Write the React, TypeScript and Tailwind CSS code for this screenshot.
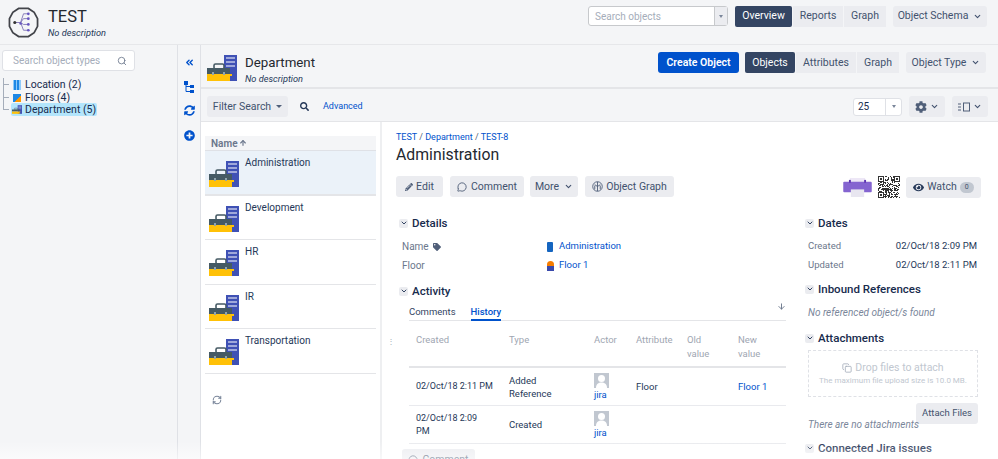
import React from "react";
import { ArrowDown, ArrowUp, ChevronDown, ChevronsLeft, Copy, MessageCircle, RefreshCw, Search } from "lucide-react";
import { FaCog, FaEye, FaPencilAlt, FaPlusCircle, FaSearch, FaSyncAlt, FaTag } from "react-icons/fa";

const Caret = () => <span className="ml-[5px] inline-block h-0 w-0 border-x-[3px] border-t-[3px] border-x-transparent border-t-[#505f79]" />;

const Btn = ({ children, className = "" }: { children: React.ReactNode; className?: string }) => (
  <div className={`flex h-[21px] items-center justify-center rounded-[3px] bg-[#ebecf0] text-[10.5px] text-[#42526e] ${className}`}>{children}</div>
);

const Seg = ({ items, active }: { items: { label: string; w: string }[]; active: string }) => (
  <div className="flex gap-px text-[10.5px]">
    {items.map((i) => (
      <div key={i.label} className={`flex h-[21px] items-center justify-center ${i.w} ${i.label === active ? "rounded-[2px] bg-[#344563] text-white" : "bg-[#ebecf0] text-[#42526e]"}`}>
        {i.label}
      </div>
    ))}
  </div>
);

const Briefcase = ({ className = "h-[26px] w-[30px]" }: { className?: string }) => (
  <svg viewBox="0 0 30 26" className={className}>
    <rect x="17" y="0" width="13" height="26" fill="#3f51b5" />
    <rect x="19" y="2" width="9" height="2" fill="#9fa8da" />
    <rect x="19" y="6" width="9" height="2" fill="#9fa8da" />
    <rect x="19" y="10" width="9" height="2" fill="#9fa8da" />
    <rect x="7" y="9" width="10" height="5" rx="1.5" fill="none" stroke="#455a64" strokeWidth="1.6" />
    <rect x="0" y="13" width="23" height="6" fill="#455a64" />
    <rect x="0" y="19" width="23" height="7" fill="#ffc107" />
    <rect x="22" y="19" width="3" height="2" fill="#ffc107" />
    <rect x="5" y="17" width="2" height="3" fill="#90a4ae" />
    <rect x="16" y="17" width="2" height="3" fill="#90a4ae" />
  </svg>
);

const SectionTitle = ({ title }: { title: string }) => (
  <div className="flex items-center gap-[4px]">
    <span className="flex h-[9px] w-[9px] items-center justify-center rounded-[2px] bg-[#ebecf0]">
      <ChevronDown size={8} strokeWidth={3} className="text-[#344563]" />
    </span>
    <span className="text-[11.500px] font-medium leading-[14px] text-[#172b4d]">{title}</span>
  </div>
);

const Avatar = () => (
  <div className="flex h-[15px] w-[15px] items-end justify-center overflow-hidden bg-[#c1c7d0]">
    <svg viewBox="0 0 15 15" className="h-[15px] w-[15px]">
      <circle cx="7.5" cy="5.5" r="3.5" fill="#fff" />
      <path d="M2 15c0-4 2.5-5.5 5.5-5.5S13 11 13 15z" fill="#fff" />
    </svg>
  </div>
);

const QrCode = () => {
  const cells: React.ReactNode[] = [];
  for (let y = 0; y < 22; y++) {
    for (let x = 0; x < 22; x++) {
      const noise = Math.sin(x * 12.9898 + y * 78.233) * 43758.5453;
      if (noise - Math.floor(noise) < 0.5) cells.push(<rect key={`${x}-${y}`} x={x} y={y} width="1" height="1" />);
    }
  }
  return (
    <svg viewBox="0 0 22 22" className="ml-[6px] h-[22px] w-[22px]" fill="#333" shapeRendering="crispEdges">
      {cells}
      <path d="M0 0h6v6H0zM16 0h6v6h-6zM0 16h6v6H0z" fill="#fff" />
      <path d="M0 0h6v6H0zM1 1v4h4V1zM16 0h6v6h-6zM17 1v4h4V1zM0 16h6v6H0zM1 17v4h4v-4z" fillRule="evenodd" />
      <path d="M2 2h2v2H2zM18 2h2v2h-2zM2 18h2v2H2z" />
    </svg>
  );
};

const objects = ["Administration", "Development", "HR", "IR", "Transportation"];

export default function App() {
  return (
    <div className="relative flex h-[459px] w-[998px] flex-col overflow-hidden bg-white text-[10px] text-[#172b4d] [font-family:Roboto,'Liberation_Sans',sans-serif]">
      <header className="flex h-[45px] shrink-0 items-center border-b border-[#e6e7ea] bg-[#f4f5f7] pl-[8px] pr-[11px]">
        <svg viewBox="0 0 32 32" className="h-[31px] w-[31px]">
          <path d="M11 1.5h10l6 4 3.5 6.5v8l-3.500 6.500-6 4H11l-6-4-3.500-6.500v-8L5 5.500z" fill="none" stroke="#42444a" strokeWidth="1.8" />
          <path d="M7 16h6M13 16l3-9h5M13 16l3-4h5M13 16l3 2h5M13 16l3 8h5" fill="none" stroke="#6b5fa8" strokeWidth="0.8" />
          <circle cx="7" cy="16" r="1.6" fill="#333" />
          <circle cx="13" cy="17" r="1.3" fill="#6554c0" />
          <circle cx="21" cy="7" r="1.4" fill="#6554c0" />
          <circle cx="21" cy="12" r="1.4" fill="#6554c0" />
          <circle cx="21" cy="18" r="1.4" fill="#6554c0" />
          <circle cx="21" cy="24" r="1.4" fill="#6554c0" />
        </svg>
        <div className="ml-[9px] mt-[2px]">
          <div className="text-[16.500px] leading-[18px] text-[#24282f]">TEST</div>
          <div className="mt-px text-[9.200px] italic leading-[12px] text-[#253858]">No description</div>
        </div>
        <div className="mb-[12px] ml-auto flex items-center">
          <div className="flex h-[20px] w-[140px] items-center rounded-[3px] border border-[#c7c9cc] bg-white pl-[6px] text-[#a5adba]">
            <span className="flex-1">Search objects</span>
            <span className="flex h-full w-[13px] items-center justify-center border-l border-[#c7c9cc] bg-[#ebecf0]">
              <span className="inline-block h-0 w-0 border-x-[2px] border-t-[3px] border-x-transparent border-t-[#7a869a]" />
            </span>
          </div>
          <div className="ml-[7px]">
            <Seg active="Overview" items={[{ label: "Overview", w: "w-[57px]" }, { label: "Reports", w: "w-[50px]" }, { label: "Graph", w: "w-[42px]" }]} />
          </div>
          <Btn className="ml-[7px] w-[94px]">
            Object Schema
            <ChevronDown size={9} strokeWidth={3} className="ml-[5px]" />
          </Btn>
        </div>
      </header>

      <div className="flex min-h-0 flex-1">
        <aside className="w-[178px] shrink-0 border-r border-[#dfe1e6] bg-[#f4f5f7] pl-[2px] pt-[5px]">
          <div className="flex h-[21px] w-[133px] items-center justify-between rounded-[3px] border border-[#dfe1e6] bg-white pl-[10px] pr-[7px] text-[#a5adba]">
            Search object types
            <Search size={10} className="text-[#6b778c]" />
          </div>
          <ul className="mt-[7px] pl-[1px] text-[10.5px] whitespace-nowrap">
            <li className="flex h-[13px] items-center">
              <span className="h-[7px] w-[6px] -translate-y-[3px] border-b border-l border-[#a5adba]" />
              <span className="ml-[4px] mr-[4px] flex h-[10px] w-[8px] gap-[1px] bg-[#90caf9] px-[1px]"><span className="w-[2px] bg-[#1e88e5]" /><span className="w-[2px] bg-[#1e88e5]" /></span>
              Location (2)
            </li>
            <li className="flex h-[13px] items-center">
              <span className="h-[13px] w-[6px] -translate-y-[6px] border-b border-l border-[#a5adba]" />
              <span className="ml-[4px] mr-[4px] h-[8px] w-[8px] bg-[linear-gradient(135deg,#1e88e5_60%,#ff9800_60%)]" />
              Floors (4)
            </li>
            <li className="-mt-px flex h-[13px] items-center">
              <span className="h-[13px] w-[6px] -translate-y-[6px] border-b border-l border-[#a5adba]" />
              <span className="ml-[2px] flex h-[13px] w-[86px] items-center gap-[3px] rounded-[2px] bg-[#b3e5fc] pl-[1px]">
                <Briefcase className="h-[9px] w-[10px]" />
                Department (5)
              </span>
            </li>
          </ul>
        </aside>

        <nav className="flex w-[23px] shrink-0 flex-col items-center gap-[12.500px] border-r border-[#dfe1e6] bg-[#f4f5f7] pt-[12px] text-[#0052cc]">
          <ChevronsLeft size={11} strokeWidth={3} />
          <svg viewBox="0 0 10 12" className="h-[12px] w-[10px]" fill="#0052cc"><rect x="0" y="0" width="4" height="4" /><rect x="6" y="4" width="4" height="3" /><rect x="6" y="9" width="4" height="3" /><path d="M2 4v6.5h4M2 5.500h4" fill="none" stroke="#0052cc" /></svg>
          <FaSyncAlt size={11} />
          <FaPlusCircle size={11} className="mt-px" />
        </nav>

        <main className="flex min-w-0 flex-1 flex-col">
          <div className="flex h-[44px] shrink-0 items-start border-b-2 border-[#e4e5e8] bg-[#f4f5f7] pl-[6px] pr-[12px]">
            <Briefcase className="mt-[10px] h-[26px] w-[30px]" />
            <div className="ml-[8px] mt-[10px]">
              <div className="text-[13.300px] leading-[15px] text-[#24282f]">Department</div>
              <div className="mt-[3px] text-[9.200px] italic leading-[11px] text-[#253858]">No description</div>
            </div>
            <div className="ml-auto mt-[7px] flex items-center">
              <div className="flex h-[21px] w-[81px] items-center justify-center rounded-[3px] bg-[#0052cc] text-[10.5px] font-semibold text-white">Create Object</div>
              <div className="ml-[6px]">
                <Seg active="Objects" items={[{ label: "Objects", w: "w-[50px]" }, { label: "Attributes", w: "w-[60px]" }, { label: "Graph", w: "w-[42px]" }]} />
              </div>
              <Btn className="ml-[7px] w-[80px]">
                Object Type
                <ChevronDown size={9} strokeWidth={3} className="ml-[5px]" />
              </Btn>
            </div>
          </div>

          <div className="flex h-[33px] shrink-0 items-center border-b border-[#e4e5e8] bg-[#f4f5f7] pl-[6px] pr-[10px] pt-[3px]">
            <Btn className="w-[81px]">
              Filter Search
              <Caret />
            </Btn>
            <FaSearch size={9} className="ml-[12px] text-[#253858]" />
            <span className="ml-[14px] mt-px text-[9px] text-[#0052cc]">Advanced</span>
            <div className="ml-auto flex items-center">
              <div className="flex h-[18px] w-[49px] items-center rounded-[3px] border border-[#dfe1e6] bg-white pl-[4px]">
                <span className="flex-1">25</span>
                <span className="flex h-full w-[16px] items-center justify-center border-l border-[#dfe1e6]">
                  <span className="inline-block h-0 w-0 border-x-[2px] border-t-[3px] border-x-transparent border-t-[#7a869a]" />
                </span>
              </div>
              <Btn className="ml-[7px] w-[36px]">
                <FaCog size={12} className="text-[#505f79]" />
                <ChevronDown size={9} strokeWidth={3} className="ml-[3px]" />
              </Btn>
              <Btn className="ml-[7px] w-[36px]">
                <svg viewBox="0 0 12 10" className="h-[10px] w-[12px]" fill="none" stroke="#505f79">
                  <path d="M0 2h3M0 5h3M0 8h3" />
                  <rect x="5.500" y="1" width="6" height="8" />
                </svg>
                <ChevronDown size={9} strokeWidth={3} className="ml-[3px]" />
              </Btn>
            </div>
          </div>

          <div className="flex min-h-0 flex-1">
            <section className="w-[181px] shrink-0 border-r-2 border-[#eeeff1] pl-[4px] pr-[4px] pt-[14px]">
              <div className="flex h-[15px] items-center border-b border-[#dfe1e6] bg-[#f4f5f7] pl-[6px] font-semibold text-[#6b778c]">
                Name
                <ArrowUp size={8} strokeWidth={3.5} className="ml-px" />
              </div>
              {objects.map((name, i) => (
                <div key={name} className={`flex h-[44.500px] border-b border-[#e4e5e8] pl-[4px] ${i === 0 ? "border-b-2 bg-[#ebf2f9]" : ""}`}>
                  <Briefcase className="mt-[10px] h-[26px] w-[30px]" />
                  <span className="ml-[6px] mt-[4px] text-[#253858]">{name}</span>
                </div>
              ))}
              <RefreshCw size={10} strokeWidth={2.5} className="ml-[7px] mt-[21px] text-[#7a869a]" />
            </section>

            <section className="relative flex min-w-0 flex-1 pl-[14px] pr-[17px] pt-[10px]">
              <span className="absolute left-[5px] top-[218px] text-[8px] leading-[3px] text-[#a5adba]">⋮</span>
              <div className="w-[389px] shrink-0">
                <div className="text-[9px] leading-[11px] text-[#0052cc]">TEST <span className="text-[#505f79]">/</span> Department <span className="text-[#505f79]">/</span> TEST-8</div>
                <div className="mt-[2px] text-[15.800px] leading-[20px] text-[#24282f]">Administration</div>
                <div className="mt-[11px] flex gap-[7px]">
                  <Btn className="w-[47px]"><FaPencilAlt size={8} className="mr-[3px] text-[#505f79]" />Edit</Btn>
                  <Btn className="w-[74px]"><MessageCircle size={10} className="mr-[4px]" />Comment</Btn>
                  <Btn className="-ml-px w-[48px]">More<ChevronDown size={9} strokeWidth={3} className="ml-[5px]" /></Btn>
                  <Btn className="w-[89px]">
                    <svg viewBox="0 0 12 12" className="mr-[3px] h-[11px] w-[11px]" fill="none" stroke="#505f79"><circle cx="6" cy="6" r="5.200" /><path d="M6 1v10M3 4l3 2 3-2M3 9V5M9 9V5" /></svg>
                    Object Graph
                  </Btn>
                </div>
                <div className="ml-[3px] mt-[19px]"><SectionTitle title="Details" /></div>
                <div className="mt-[7px] flex h-[19px] items-center pl-[6px]">
                  <span className="flex w-[145px] items-center text-[#6b778c]">Name<FaTag size={8} className="ml-[4px] text-[#505f79]" /></span>
                  <span className="flex items-center text-[9.500px] text-[#0052cc]"><span className="mr-[6px] h-[10px] w-[6px] rounded-[1px] bg-[#1565c0]" />Administration</span>
                </div>
                <div className="flex h-[19px] items-center pl-[6px]">
                  <span className="w-[145px] text-[#6b778c]">Floor</span>
                  <span className="flex items-center text-[9.500px] text-[#0052cc]"><span className="mr-[5px] h-[10px] w-[7px] rounded-t-full bg-[linear-gradient(#f57c00_50%,#3949ab_50%)]" />Floor 1</span>
                </div>
                <div className="ml-[3px] mt-[9px]"><SectionTitle title="Activity" /></div>
                <div className="relative ml-[13px] mt-[7px] flex h-[16px] w-[377px] gap-[15px] border-b border-[#e4e5e8] text-[9.500px]">
                  <span className="text-[#344563]">Comments</span>
                  <span className="h-[16px] border-b-2 border-[#0052cc] font-medium text-[#0052cc]">History</span>
                  <ArrowDown size={9} strokeWidth={2.5} className="absolute -top-[3px] right-0 text-[#6b778c]" />
                </div>
                <div className="ml-[13px] w-[377px] text-[9.500px]">
                  <div className="grid h-[47px] grid-cols-[93px_85px_42px_51px_51px_1fr] border-b-2 border-[#e4e5e8] pl-[7px] pt-[12px] leading-[14px] text-[#a0a6b2]">
                    <span>Created</span><span>Type</span><span>Actor</span><span>Attribute</span><span>Old<br />value</span><span>New<br />value</span>
                  </div>
                  <div className="grid h-[38px] grid-cols-[93px_85px_42px_51px_51px_1fr] items-center border-b border-[#e9eaee] pl-[7px] leading-[13px] text-[#253858]">
                    <span className="text-[9px]">02/Oct/18 2:11 PM</span><span>Added<br />Reference</span>
                    <span className="text-[#0052cc]"><Avatar />jira</span><span>Floor</span><span /><span className="text-[#0052cc]">Floor 1</span>
                  </div>
                  <div className="grid h-[38px] grid-cols-[93px_85px_42px_51px_51px_1fr] items-center border-b border-[#e9eaee] pl-[7px] leading-[13px] text-[#253858]">
                    <span className="text-[9px]">02/Oct/18 2:09<br />PM</span><span>Created</span>
                    <span className="text-[#0052cc]"><Avatar />jira</span><span /><span /><span />
                  </div>
                </div>
                <Btn className="ml-[6px] mt-[5px] w-[73px]"><MessageCircle size={10} className="mr-[4px]" />Comment</Btn>
              </div>

              <div className="ml-[20px] flex-1">
                <div className="mt-[44px] flex items-center justify-end">
                  <svg viewBox="0 0 30 20" className="h-[19px] w-[29px]">
                    <rect x="7" y="0" width="16" height="6" fill="#ede7f6" />
                    <rect x="0" y="4" width="30" height="11" rx="1" fill="#8464d0" />
                    <rect x="6" y="2" width="2" height="3" fill="#5e35b1" /><rect x="22" y="2" width="2" height="3" fill="#5e35b1" />
                    <rect x="8" y="12" width="14" height="8" fill="#e8e6f0" />
                  </svg>
                  <QrCode />
                  <Btn className="ml-[6px] w-[75px]">
                    <FaEye size={11} className="mr-[3px] text-[#253858]" />
                    Watch
                    <span className="ml-[3px] flex h-[11px] w-[14px] items-center justify-center rounded-full bg-[#c1c7d0] text-[7px]">0</span>
                  </Btn>
                </div>
                <div className="mt-[18px]"><SectionTitle title="Dates" /></div>
                <div className="mt-[7px] flex h-[19px] items-center justify-between pl-[3px] pr-[4px] text-[9.500px]">
                  <span className="text-[#6b778c]">Created</span><span className="text-[#253858]">02/Oct/18 2:09 PM</span>
                </div>
                <div className="flex h-[18px] items-center justify-between pl-[3px] pr-[4px] text-[9.500px]">
                  <span className="text-[#6b778c]">Updated</span><span className="text-[#253858]">02/Oct/18 2:11 PM</span>
                </div>
                <div className="mt-[8px]"><SectionTitle title="Inbound References" /></div>
                <div className="ml-[3px] mt-[10px] italic leading-[13px] text-[#7a869a]">No referenced object/s found</div>
                <div className="mt-[12px]"><SectionTitle title="Attachments" /></div>
                <div className="ml-[3px] mt-[5px] flex h-[47px] w-[170px] flex-col items-center justify-center border border-dashed border-[#dfe1e6] text-[#c1c7d0]">
                  <span className="flex items-center text-[10.5px] leading-[14px]"><Copy size={10} className="mr-[3px] text-[#a5adba]" />Drop files to attach</span>
                  <span className="text-[8px] leading-[11px]">The maximum file upload size is 10.0 MB.</span>
                </div>
                <div className="mt-[6px] flex h-[20px] items-start justify-end pr-[3px]">
                  <Btn className="h-[20px] w-[62px]"><span className="text-[9.500px]">Attach Files</span></Btn>
                </div>
                <div className="ml-[3px] -mt-[5px] italic leading-[13px] text-[#7a869a]">There are no attachments</div>
                <div className="mt-[10px]"><SectionTitle title="Connected Jira issues" /></div>
              </div>
            </section>
          </div>
        </main>
      </div>
      <div className="pointer-events-none absolute inset-x-0 bottom-0 h-[18px] bg-[linear-gradient(transparent,rgba(255,255,255,0.55))]" />
    </div>
  );
}
